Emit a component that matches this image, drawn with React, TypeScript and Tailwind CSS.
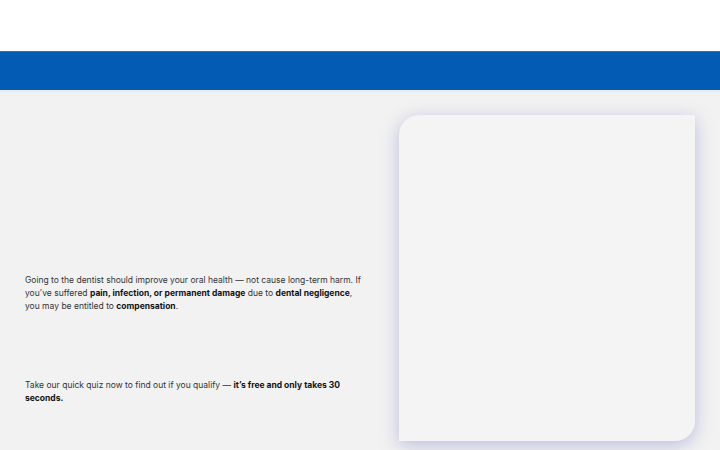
export default function App() {
  return (
    <div className="w-[720px] h-[450px] overflow-hidden bg-[#f2f2f2]" style={{ fontFamily: "Inter, 'Noto Sans', sans-serif" }}>
      <div className="h-[51px] bg-white" />
      <div className="h-[39px] bg-[#045bb4] border-t border-[#3b6f9a]" />
      <div className="h-[3px] bg-[#e9eff4]" />
      <div className="flex pl-[25px] pt-[22px]">
        <div className="w-[345px] flex flex-col text-[8.5px] leading-[13px] text-[#333]">
          <p className="mt-[159px]">
            Going to the dentist should improve your oral health — not cause long-term harm. If<br />
            you’ve suffered <b className="font-bold text-[#111]">pain, infection, or permanent damage</b> due to{" "}
            <b className="font-bold text-[#111]">dental negligence</b>,<br />
            you may be entitled to <b className="font-bold text-[#111]">compensation</b>.
          </p>
          <p className="mt-[66px]">
            Take our quick quiz now to find out if you qualify — <b className="font-bold text-[#111]">it’s free and only takes 30</b><br />
            <b className="font-bold text-[#111]">seconds.</b>
          </p>
        </div>
        <div className="ml-[29px] w-[296px] h-[326px] bg-[#f4f4f4] rounded-tl-[20px] rounded-br-[20px] shadow-[0_4px_18px_rgba(90,90,190,0.35)]" />
      </div>
    </div>
  );
}
